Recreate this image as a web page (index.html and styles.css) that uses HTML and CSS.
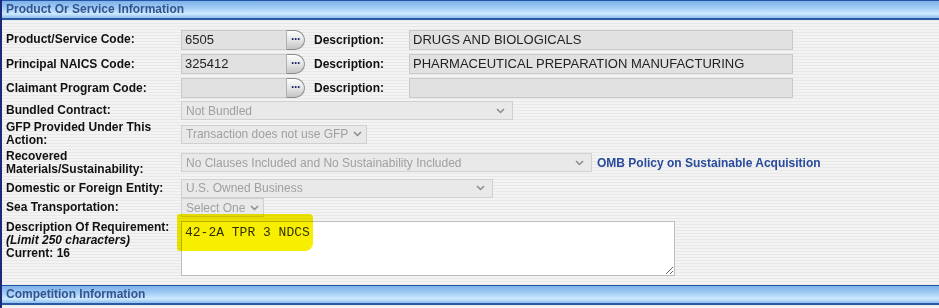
FILE: index.html
```html
<!DOCTYPE html>
<html lang="en">
<head>
  <meta charset="UTF-8">
  <title>Product Or Service Information</title>
  <link rel="stylesheet" href="styles.css">
</head>
<body>
  <div class="panel">
    <div class="section-head">Product Or Service Information</div>

    <div class="form">
      <div class="row r-code">
        <span class="lbl">Product/Service Code:</span>
        <div class="field code">6505</div>
        <span class="lookup">&middot;&middot;&middot;</span>
        <span class="dlbl">Description:</span>
        <div class="field desc">DRUGS AND BIOLOGICALS</div>
      </div>
      <div class="row r-naics">
        <span class="lbl">Principal NAICS Code:</span>
        <div class="field code">325412</div>
        <span class="lookup">&middot;&middot;&middot;</span>
        <span class="dlbl">Description:</span>
        <div class="field desc">PHARMACEUTICAL PREPARATION MANUFACTURING</div>
      </div>
      <div class="row r-claim">
        <span class="lbl">Claimant Program Code:</span>
        <div class="field code"></div>
        <span class="lookup">&middot;&middot;&middot;</span>
        <span class="dlbl">Description:</span>
        <div class="field desc"></div>
      </div>

      <div class="row r-bundled">
        <span class="lbl">Bundled Contract:</span>
        <div class="select w-bundled">Not Bundled<svg class="chev" width="9" height="6" viewBox="0 0 9 6"><polyline points="1,1 4.5,4.5 8,1" /></svg></div>
      </div>
      <div class="row r-gfp">
        <span class="lbl">GFP Provided Under This Action:</span>
        <div class="select w-gfp">Transaction does not use GFP<svg class="chev" width="9" height="6" viewBox="0 0 9 6"><polyline points="1,1 4.5,4.5 8,1" /></svg></div>
      </div>
      <div class="row r-recovered">
        <span class="lbl">Recovered Materials/Sustainability:</span>
        <div class="select w-recovered">No Clauses Included and No Sustainability Included<svg class="chev" width="9" height="6" viewBox="0 0 9 6"><polyline points="1,1 4.5,4.5 8,1" /></svg></div>
        <a class="policy" href="#">OMB Policy on Sustainable Acquisition</a>
      </div>
      <div class="row r-domestic">
        <span class="lbl">Domestic or Foreign Entity:</span>
        <div class="select w-domestic">U.S. Owned Business<svg class="chev" width="9" height="6" viewBox="0 0 9 6"><polyline points="1,1 4.5,4.5 8,1" /></svg></div>
      </div>
      <div class="row r-sea">
        <span class="lbl">Sea Transportation:</span>
        <div class="select w-sea">Select One<svg class="chev" width="9" height="6" viewBox="0 0 9 6"><polyline points="1,1 4.5,4.5 8,1" /></svg></div>
      </div>

      <div class="row r-req">
        <span class="lbl">Description Of Requirement:<br><em>(Limit 250 characters)</em><br>Current: 16</span>
        <div class="req-wrap">
          <textarea class="req" readonly>42-2A TPR 3 NDCS</textarea>
          <span class="marker"></span>
        </div>
      </div>
    </div>

    <div class="section-head">Competition Information</div>
  </div>
</body>
</html>
```

FILE: styles.css
```css
body {
  margin: 0;
  font-family: "Liberation Sans", Arial, sans-serif;
  font-size: 12px;
  color: #111;
  background: #eeeeee;
}

.panel {
  height: 308px;
  border-left: 2px solid #1c2a78;
  background: repeating-linear-gradient(#f3f3f3 0 2px, #e8e8e8 2px 3px);
  overflow: hidden;
}

.section-head {
  height: 17px;
  line-height: 17px;
  padding-left: 4px;
  border-top: 1px solid #2455a6;
  border-bottom: 2px solid #2a5aa3;
  background: linear-gradient(#7db1e9, #a6d0f6 45%, #cdeaff 75%, #8fbdee);
  color: #34548f;
  font-weight: bold;
  font-size: 12px;
}

.form {
  padding: 7px 0 0 4px;
  height: 258px;
}

.row {
  display: flex;
  align-items: center;
}

.r-code { height: 25px; }
.r-naics { height: 24px; }
.r-claim { height: 24px; }
.r-bundled { height: 21px; }
.r-gfp { height: 26px; }
.r-recovered { height: 31px; }
.r-domestic { height: 20px; }
.r-sea { height: 19px; }
.r-req { align-items: flex-start; padding-top: 3px; }

.lbl {
  width: 175px;
  flex: none;
  font-weight: bold;
  line-height: 13px;
  padding-right: 8px;
  box-sizing: border-box;
}

.r-req .lbl { padding-top: 1px; }

.field {
  height: 20px;
  box-sizing: border-box;
  border: 1px solid #cacaca;
  background: #e1e1e1;
  font-size: 13px;
  line-height: 18px;
  padding-left: 3px;
  color: #222;
  white-space: nowrap;
}

.code { width: 106px; }
.desc { width: 384px; }

.lookup {
  width: 19px;
  height: 20px;
  box-sizing: border-box;
  margin-left: -1px;
  border: 1px solid #8c8c8c;
  border-left-color: #b0b0b0;
  border-radius: 0 10px 10px 0;
  background: linear-gradient(#fefefe, #e2e2e2 55%, #c4c4c4);
  color: #1e2a6e;
  font-weight: bold;
  font-size: 12px;
  line-height: 16px;
  text-align: center;
  letter-spacing: -1px;
}

.dlbl {
  width: 95px;
  margin-left: 9px;
  font-weight: bold;
}

.select {
  height: 19px;
  box-sizing: border-box;
  display: flex;
  align-items: center;
  justify-content: space-between;
  padding: 0 7px 0 4px;
  border: 1px solid #d0d0d0;
  background: #e9e9e9;
  color: #a0a0a0;
  font-size: 12px;
  white-space: nowrap;
}

.chev polyline {
  fill: none;
  stroke: #8a8a8a;
  stroke-width: 1.5;
}

.w-bundled { width: 332px; }
.w-gfp { width: 186px; padding-right: 4px; }
.w-recovered { width: 411px; }
.w-domestic { width: 312px; }
.w-sea { width: 83px; padding-right: 4px; }

.policy {
  margin-left: 5px;
  color: #2a4b9c;
  font-weight: bold;
  text-decoration: none;
}

.req-wrap {
  position: relative;
}

.req {
  display: block;
  width: 494px;
  height: 55px;
  box-sizing: border-box;
  margin: 1px 0 0;
  padding: 3px 3px;
  border: 1px solid #bdbdbd;
  background: #fff;
  font-family: "Liberation Mono", "Courier New", monospace;
  font-size: 13px;
  line-height: 15px;
  color: #333;
  resize: both;
  outline: none;
}

.marker {
  position: absolute;
  left: -4px;
  top: -6px;
  width: 136px;
  height: 37px;
  background: #f8ee00;
  border-radius: 2px 4px 8px 3px;
  mix-blend-mode: multiply;
}
```
